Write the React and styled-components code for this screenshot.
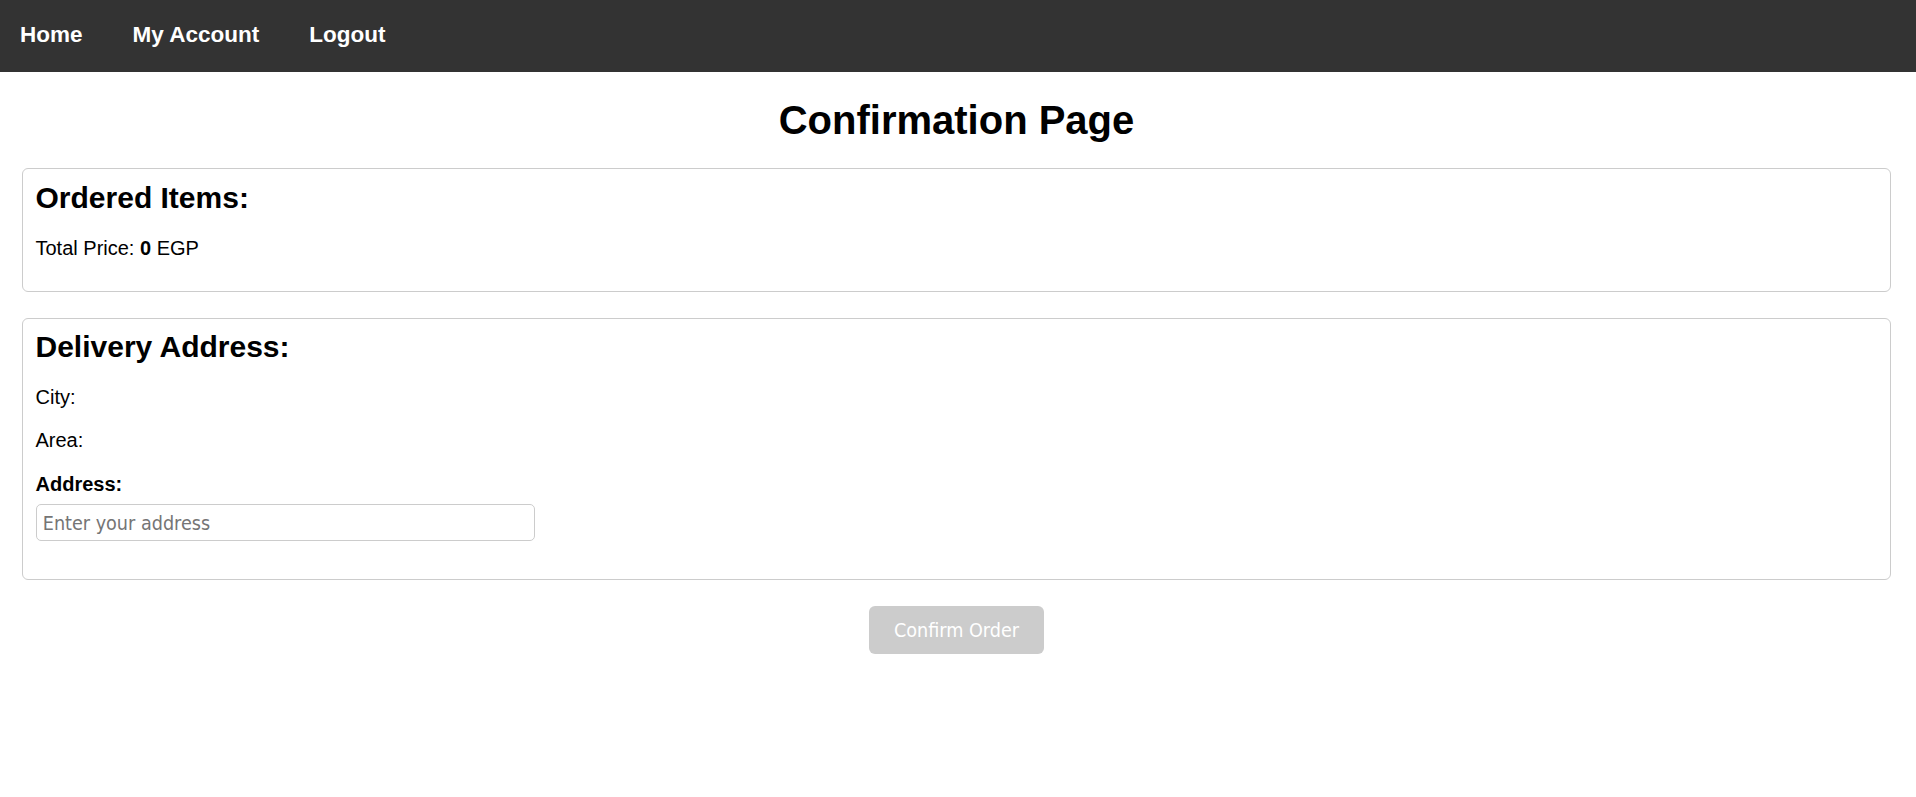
import React from "react";
import styled, { createGlobalStyle } from "styled-components";

const GlobalStyle = createGlobalStyle`
  html, body {
    margin: 0;
    padding: 0;
    background: #ffffff;
  }
  body {
    font-family: "Liberation Sans", Arial, sans-serif;
    color: #000000;
  }
`;

const NavBar = styled.nav`
  display: flex;
  align-items: center;
  gap: 50px;
  height: 72px;
  padding: 0 0 2px 20px;
  box-sizing: border-box;
  background: #333333;
`;

const NavLink = styled.a`
  color: #ffffff;
  font-size: 22.5px;
  line-height: 26px;
  font-weight: bold;
  text-decoration: none;
  cursor: pointer;
`;

const Main = styled.main`
  padding: 0 25px 0 22px;
`;

const Title = styled.h1`
  margin: 24.5px 0 25.5px;
  text-align: center;
  font-size: 40px;
  font-weight: bold;
  line-height: 46px;
`;

const Card = styled.section`
  border: 1px solid #cccccc;
  border-radius: 6px;
  padding: 11.5px 12.5px 11px;
  margin-bottom: 26px;
`;

const CardTitle = styled.h2`
  margin: 0 0 21.5px;
  font-size: 30px;
  font-weight: bold;
  line-height: 34.5px;
`;

const Line = styled.p`
  margin: 20px 0;
  font-size: 20px;
  line-height: 23px;
`;

const FieldLabel = styled.label`
  display: block;
  margin-top: 21px;
  font-size: 20px;
  font-weight: bold;
  line-height: 23px;
`;

const TextInput = styled.input`
  display: block;
  box-sizing: border-box;
  width: 499px;
  margin: 7.5px 0 26.5px;
  padding: 7px 6.25px 5.5px;
  font-family: "DejaVu Sans Condensed", "DejaVu Sans", sans-serif;
  font-size: 19.6px;
  line-height: 23px;
  border: 1px solid #cccccc;
  border-radius: 5px;
  outline: none;
  color: #000;

  &::placeholder {
    color: #757575;
  }
`;

const ConfirmButton = styled.button`
  display: block;
  margin: 0 auto;
  padding: 13.5px 25px 11.5px;
  height: 48px;
  box-sizing: border-box;
  border: none;
  border-radius: 6px;
  background: #cccccc;
  color: #ffffff;
  font-family: "DejaVu Sans Condensed", "DejaVu Sans", sans-serif;
  font-size: 19.6px;
  line-height: 23px;
  cursor: not-allowed;
`;

export default function App() {
  return (
    <>
      <GlobalStyle />
      <NavBar>
        <NavLink>Home</NavLink>
        <NavLink>My Account</NavLink>
        <NavLink>Logout</NavLink>
      </NavBar>
      <Main>
        <Title>Confirmation Page</Title>
        <Card>
          <CardTitle>Ordered Items:</CardTitle>
          <Line>
            Total Price: <b>0</b> EGP
          </Line>
        </Card>
        <Card>
          <CardTitle>Delivery Address:</CardTitle>
          <Line>City: </Line>
          <Line>Area: </Line>
          <FieldLabel htmlFor="address">Address:</FieldLabel>
          <TextInput id="address" type="text" placeholder="Enter your address" />
        </Card>
        <ConfirmButton disabled>Confirm Order</ConfirmButton>
      </Main>
    </>
  );
}
